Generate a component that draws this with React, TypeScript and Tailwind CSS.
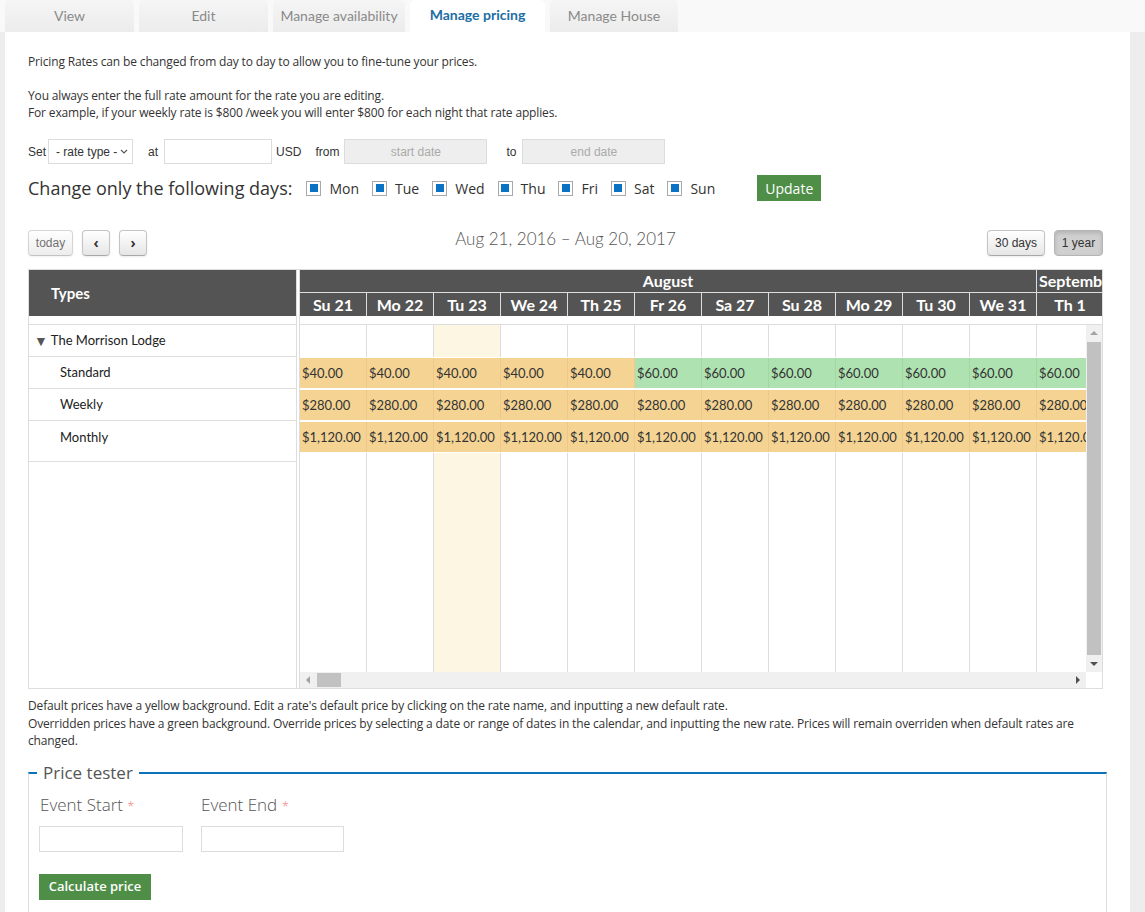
import React from 'react';

const lato = "font-['Lato',sans-serif]";
const open = "font-['Open_Sans',sans-serif]";
const arial = "font-['Liberation_Sans',Arial,sans-serif]";

const tabs = [
  { label: 'View', w: 'w-[129px]' },
  { label: 'Edit', w: 'w-[129px]' },
  { label: 'Manage availability', w: 'w-[132px]' },
  { label: 'Manage pricing', w: 'w-[135px]', active: true },
  { label: 'Manage House', w: 'w-[128px]' },
];

const days = [
  'Su 21', 'Mo 22', 'Tu 23', 'We 24', 'Th 25', 'Fr 26',
  'Sa 27', 'Su 28', 'Mo 29', 'Tu 30', 'We 31', 'Th 1',
];

// from Fr 26 on the standard rate is overridden (green)
const standard = ['$40.00', '$40.00', '$40.00', '$40.00', '$40.00', '$60.00', '$60.00', '$60.00', '$60.00', '$60.00', '$60.00', '$60.00'];

const weekdays = ['Mon', 'Tue', 'Wed', 'Thu', 'Fri', 'Sat', 'Sun'];

const Checkbox = () => (
  <span className="flex h-[15px] w-[15px] items-center justify-center border border-[#a9a9a9] bg-white">
    <span className="h-[8px] w-[8px] bg-[#0a73c4]" />
  </span>
);

const fcBtn =
  'h-[26px] rounded-[4px] border border-[#c4c4c4] border-b-[#a9a9a9] bg-linear-to-b from-[#ffffff] to-[#e6e6e6] shadow-[0_1px_2px_rgba(0,0,0,0.08)] text-[12px] text-[#333]';

const Tri = ({ dir }: { dir: 'up' | 'down' | 'left' | 'right' }) => {
  const pts = {
    up: '0,5 4,1 8,5',
    down: '0,1 8,1 4,5',
    left: '5,0 5,8 1,4',
    right: '1,0 1,8 5,4',
  }[dir];
  const vert = dir === 'up' || dir === 'down';
  return (
    <svg viewBox={vert ? '0 0 8 6' : '0 0 6 8'} className={vert ? 'w-[8px] h-[6px]' : 'w-[6px] h-[8px]'}>
      <polygon points={pts} fill={dir === 'up' || dir === 'left' ? '#a3a3a3' : '#505050'} />
    </svg>
  );
};

const EventRow = ({ values, green }: { values: string[]; green?: (i: number) => boolean }) => (
  <div className="flex h-[32px] shrink-0 py-px">
    {values.map((v, i) => {
      const g = green ? green(i) : false;
      return (
        <div
          key={i}
          className={`w-[67px] shrink-0 border-r pl-[2px] text-[13px] leading-[30px] text-[#333] whitespace-nowrap overflow-hidden ${
            g ? 'bg-[#afe2b1] border-[#a2d7a4]' : 'bg-[#f4d393] border-[#ecc98a]'
          }`}
        >
          {v}
        </div>
      );
    })}
  </div>
);

export default function App() {
  return (
    <div className={`min-h-screen bg-[#ededed] ${open}`}>
      {/* tabs */}
      <div className="flex h-[32px] gap-[5px] bg-[#f9f9f9] pl-[5px]">
        {tabs.map((t) => (
          <div
            key={t.label}
            className={`${t.w} flex items-center justify-center rounded-t-[5px] text-[14px] ${lato} ${
              t.active
                ? 'bg-white pb-[3px] font-bold text-[#1c6ea4]'
                : 'bg-linear-to-b from-[#f5f5f5] to-[#ececec] pb-px text-[#8a8a8a]'
            }`}
          >
            {t.label}
          </div>
        ))}
      </div>

      <div className="ml-[5px] mr-[15px] bg-white px-[23px] pb-[40px] pt-[21px]">
        <div className="text-[12px] leading-[17px] text-[#333] tracking-[-0.15px]">
          <p className="mb-[17px]">Pricing Rates can be changed from day to day to allow you to fine-tune your prices.</p>
          <p>You always enter the full rate amount for the rate you are editing.</p>
          <p>For example, if your weekly rate is $800 /week you will enter $800 for each night that rate applies.</p>
        </div>

        {/* set row */}
        <div className={`mt-[18px] flex h-[25px] items-center text-[12px] text-[#333] ${arial}`}>
          <span>Set</span>
          <div className="ml-[2px] flex h-[25px] w-[85px] items-center justify-between border border-[#dcdcdc] pl-[7px] pr-[4px] text-[12px] text-[#333]">
            <span>- rate type -</span>
            <svg viewBox="0 0 8 5" className="h-[5px] w-[8px]">
              <polyline points="1,1 4,4 7,1" fill="none" stroke="#555" strokeWidth="1.1" />
            </svg>
          </div>
          <span className="ml-[15px]">at</span>
          <div className="ml-[6px] h-[25px] w-[108px] border border-[#dcdcdc]" />
          <span className="ml-[4px]">USD</span>
          <span className="ml-[14px]">from</span>
          <div className="ml-[5px] flex h-[25px] w-[143px] items-center justify-center border border-[#dcdcdc] bg-[#eeeeee] text-[#aaa]">
            start date
          </div>
          <span className="ml-[19px]">to</span>
          <div className="ml-[6px] flex h-[25px] w-[143px] items-center justify-center border border-[#dcdcdc] bg-[#eeeeee] text-[#aaa]">
            end date
          </div>
        </div>

        {/* days row */}
        <div className="mt-[11px] flex h-[26px] items-center">
          <span className="text-[18px] text-[#333]">Change only the following days:</span>
          <div className="ml-[14px] flex items-center">
            {weekdays.map((d) => (
              <label key={d} className="mr-[13px] flex items-center gap-[8px] text-[14px] text-[#333]">
                <Checkbox />
                <span>{d}</span>
              </label>
            ))}
          </div>
          <button className="ml-[29px] h-[26px] w-[64px] bg-[#4e8e47] text-[14px] text-white">Update</button>
        </div>

        {/* calendar toolbar */}
        <div className="mr-[4px] mt-[29px] grid grid-cols-[1fr_auto_1fr] items-start">
          <div className="flex gap-[9px]">
            <button className={`${fcBtn} w-[45px] opacity-70 ${arial}`}>today</button>
            <button className={`${fcBtn} w-[28px] font-bold text-[14px] leading-none`}>‹</button>
            <button className={`${fcBtn} w-[28px] font-bold text-[14px] leading-none`}>›</button>
          </div>
          <div className={`${lato} -mt-[4px] text-[17px] font-light text-[#555]`}>Aug 21, 2016 – Aug 20, 2017</div>
          <div className="flex justify-end gap-[9px]">
            <button className={`${fcBtn} w-[58px] ${arial}`}>30 days</button>
            <button className={`h-[26px] w-[49px] rounded-[4px] border border-[#b5b5b5] bg-[#d0d0d0] text-[12px] text-[#333] shadow-[inset_0_2px_4px_rgba(0,0,0,0.15)] ${arial}`}>
              1 year
            </button>
          </div>
        </div>

        {/* timeline */}
        <div className={`mr-[4px] mt-[13px] flex h-[420px] border border-[#dddddd] ${lato}`}>
          {/* resource column */}
          <div className="flex w-[268px] shrink-0 flex-col border-r border-[#dddddd]">
            <div className="flex h-[46px] items-center bg-[#545454] pl-[22px] text-[15px] font-bold text-white">Types</div>
            <div className="h-[9px] border-b border-[#dddddd]" />
            <div className="flex h-[32px] items-center border-b border-[#dddddd] pl-[5px] text-[13px] text-[#222]">
              <span className="mr-[3px] text-[14px] leading-none text-[#555]">▼</span>The Morrison Lodge
            </div>
            <div className="flex h-[32px] items-center border-b border-[#dddddd] pl-[31px] text-[13px] text-[#222]">Standard</div>
            <div className="flex h-[32px] items-center border-b border-[#dddddd] pl-[31px] text-[13px] text-[#222]">Weekly</div>
            <div className="flex h-[41px] items-start border-b border-[#dddddd] pl-[31px] pt-[7px] text-[13px] text-[#222]">Monthly</div>
          </div>

          <div className="w-[2px] shrink-0" />

          {/* time area */}
          <div className="flex min-w-0 flex-1 flex-col border-l border-[#dddddd]">
            <div className="h-[46px] shrink-0 overflow-hidden bg-[#545454] text-[16px] font-bold text-white">
              <div className="flex h-[23px] border-b border-[#dddddd]">
                <div className="flex w-[737px] shrink-0 items-center justify-center border-r border-[#dddddd]">August</div>
                <div className="flex w-[400px] shrink-0 items-center pl-[2px]">September</div>
              </div>
              <div className="flex h-[23px]">
                {days.map((d) => (
                  <div key={d} className="flex w-[67px] shrink-0 items-center justify-center border-r border-[#dddddd]">
                    {d}
                  </div>
                ))}
              </div>
            </div>
            <div className="h-[9px] shrink-0 border-b border-[#dddddd]" />

            <div className="flex min-h-0 flex-1">
              <div className="flex min-w-0 flex-1 flex-col">
                <div className="flex min-h-0 flex-1 flex-col overflow-hidden">
                  <div className="flex h-[32px] shrink-0">
                    {days.map((d, i) => (
                      <div key={d} className={`w-[67px] shrink-0 border-r border-[#dddddd] ${i === 2 ? 'bg-[#fcf6e2]' : ''}`} />
                    ))}
                  </div>
                  <EventRow values={standard} green={(i) => i >= 5} />
                  <EventRow values={days.map(() => '$280.00')} />
                  <EventRow values={days.map(() => '$1,120.00')} />
                  <div className="flex flex-1">
                    {days.map((d, i) => (
                      <div key={d} className={`w-[67px] shrink-0 border-r border-[#dddddd] ${i === 2 ? 'bg-[#fcf6e2]' : ''}`} />
                    ))}
                  </div>
                </div>
                {/* horizontal scrollbar */}
                <div className="flex h-[16px] shrink-0 items-center bg-[#f0f0f0] px-[5px]">
                  <Tri dir="left" />
                  <div className="ml-[6px] h-[14px] w-[24px] bg-[#c1c1c1]" />
                  <div className="flex-1" />
                  <Tri dir="right" />
                </div>
              </div>
              {/* vertical scrollbar */}
              <div className="flex w-[16px] shrink-0 flex-col">
                <div className="flex flex-1 flex-col items-center bg-[#f0f0f0] py-[5px]">
                  <Tri dir="up" />
                  <div className="mb-[6px] mt-[6px] w-[14px] flex-1 bg-[#c1c1c1]" />
                  <Tri dir="down" />
                </div>
                <div className="h-[16px] bg-white" />
              </div>
            </div>
          </div>
        </div>

        {/* help */}
        <div className="mt-[8px] text-[12px] leading-[17.5px] tracking-[-0.15px] text-[#333]">
          <p>Default prices have a yellow background. Edit a rate's default price by clicking on the rate name, and inputting a new default rate.</p>
          <p>
            Overridden prices have a green background. Override prices by selecting a date or range of dates in the calendar, and inputting the new rate. Prices will remain overriden when default rates are
            <br />
            changed.
          </p>
        </div>

        {/* price tester */}
        <fieldset className="mt-[13px] border-x border-b border-t-2 border-x-[#dddddd] border-b-[#dddddd] border-t-[#0b73b9] pb-[20px] pl-[8px]">
          <legend className="px-[6px] text-[17px] leading-[20px] text-[#555]">Price tester</legend>
          <div className="mt-[9px] flex gap-[18px] pl-[2px]">
            <div>
              <div className="pl-[1px] text-[17px] font-light text-[#555]">
                Event Start <span className="text-[13px] text-[#f08080]">*</span>
              </div>
              <div className="mt-[9px] h-[26px] w-[144px] border border-[#dcdcdc]" />
            </div>
            <div>
              <div className="text-[17px] font-light text-[#555]">
                Event End <span className="text-[13px] text-[#f08080]">*</span>
              </div>
              <div className="mt-[9px] h-[26px] w-[143px] border border-[#dcdcdc]" />
            </div>
          </div>
          <button className="ml-[2px] mt-[22px] h-[26px] w-[112px] bg-[#4e8e47] text-[13px] font-semibold text-white">
            Calculate price
          </button>
        </fieldset>
      </div>
    </div>
  );
}
